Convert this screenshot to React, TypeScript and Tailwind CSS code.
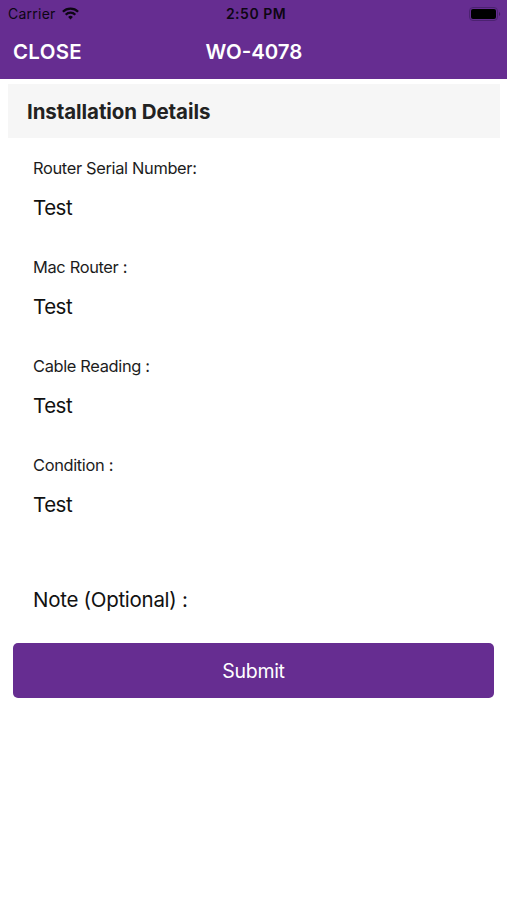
interface FieldProps {
  label: string;
  value: string;
}

const fields: FieldProps[] = [
  { label: "Router Serial Number:", value: "Test" },
  { label: "Mac Router :", value: "Test" },
  { label: "Cable Reading :", value: "Test" },
  { label: "Condition :", value: "Test" },
];

function WifiIcon() {
  return (
    <svg width="17" height="13" viewBox="0 0 17 13" fill="none" stroke="#0d0613" strokeWidth="2.3">
      <path d="M0.9 4.7a10.8 10.8 0 0 1 15.2 0" />
      <path d="M3.7 7.7a6.8 6.8 0 0 1 9.6 0" />
      <path d="M8.5 12.4l-2.4-2.5a3.4 3.4 0 0 1 4.8 0z" fill="#0d0613" stroke="none" />
    </svg>
  );
}

function BatteryIcon() {
  return (
    <svg width="32" height="14" viewBox="0 0 32 14">
      <rect x="0.5" y="0.5" width="28" height="13" rx="3.5" fill="none" stroke="#4b2270" />
      <rect x="2" y="2" width="25" height="10" rx="2" fill="#000" />
      <path d="M30 5v4c1.6-.6 1.6-3.4 0-4z" fill="#42205f" />
    </svg>
  );
}

function StatusBar() {
  return (
    <div className="grid h-[27px] grid-cols-3 items-center text-[14px] text-[#0d0613]">
      <div className="flex items-center gap-[6px] pl-2">
        <span className="tracking-[0.25px]">Carrier</span>
        <WifiIcon />
      </div>
      <span className="pl-[5px] text-center font-semibold tracking-[0.5px]">2:50 PM</span>
      <div className="flex justify-end pr-[6px]">
        <BatteryIcon />
      </div>
    </div>
  );
}

function Field({ label, value }: FieldProps) {
  return (
    <div className="h-[99px]">
      <div className="text-[16.4px] leading-[24px] tracking-[-0.33px] text-[#1c1c1c]">{label}</div>
      <div className="mt-[14px] text-[20.5px] leading-[28px] tracking-[-0.5px]">{value}</div>
    </div>
  );
}

export default function App() {
  return (
    <div className="h-[900px] w-full overflow-hidden bg-white font-['Inter',sans-serif] text-[#111]">
      <header className="h-[79px] bg-[#662d91]">
        <StatusBar />
        <div className="grid h-[51px] grid-cols-3 items-center text-[20.4px] font-semibold text-white">
          <button className="pl-[13px] text-left tracking-[0.35px]">CLOSE</button>
          <h1 className="pl-px text-center">WO-4078</h1>
        </div>
      </header>

      <h2 className="mt-[5px] mr-[7px] ml-[8px] h-[54px] bg-[#f6f6f6] pl-[19px] text-[20.5px] leading-[55px] font-bold tracking-[-0.08px] text-[#222]">
        Installation Details
      </h2>

      <main className="pt-[18px] pl-[33px]">
        {fields.map((field) => (
          <Field key={field.label} {...field} />
        ))}
        <div className="mt-[34px] text-[20.5px] leading-[28px] tracking-[-0.28px]">
          Note (Optional) :
        </div>
      </main>

      <div className="px-[13px] pt-[29px]">
        <button className="h-[55px] w-full rounded-[5px] bg-[#662d91] pt-[2px] text-[19.5px] tracking-[-0.3px] text-white">
          Submit
        </button>
      </div>
    </div>
  );
}
